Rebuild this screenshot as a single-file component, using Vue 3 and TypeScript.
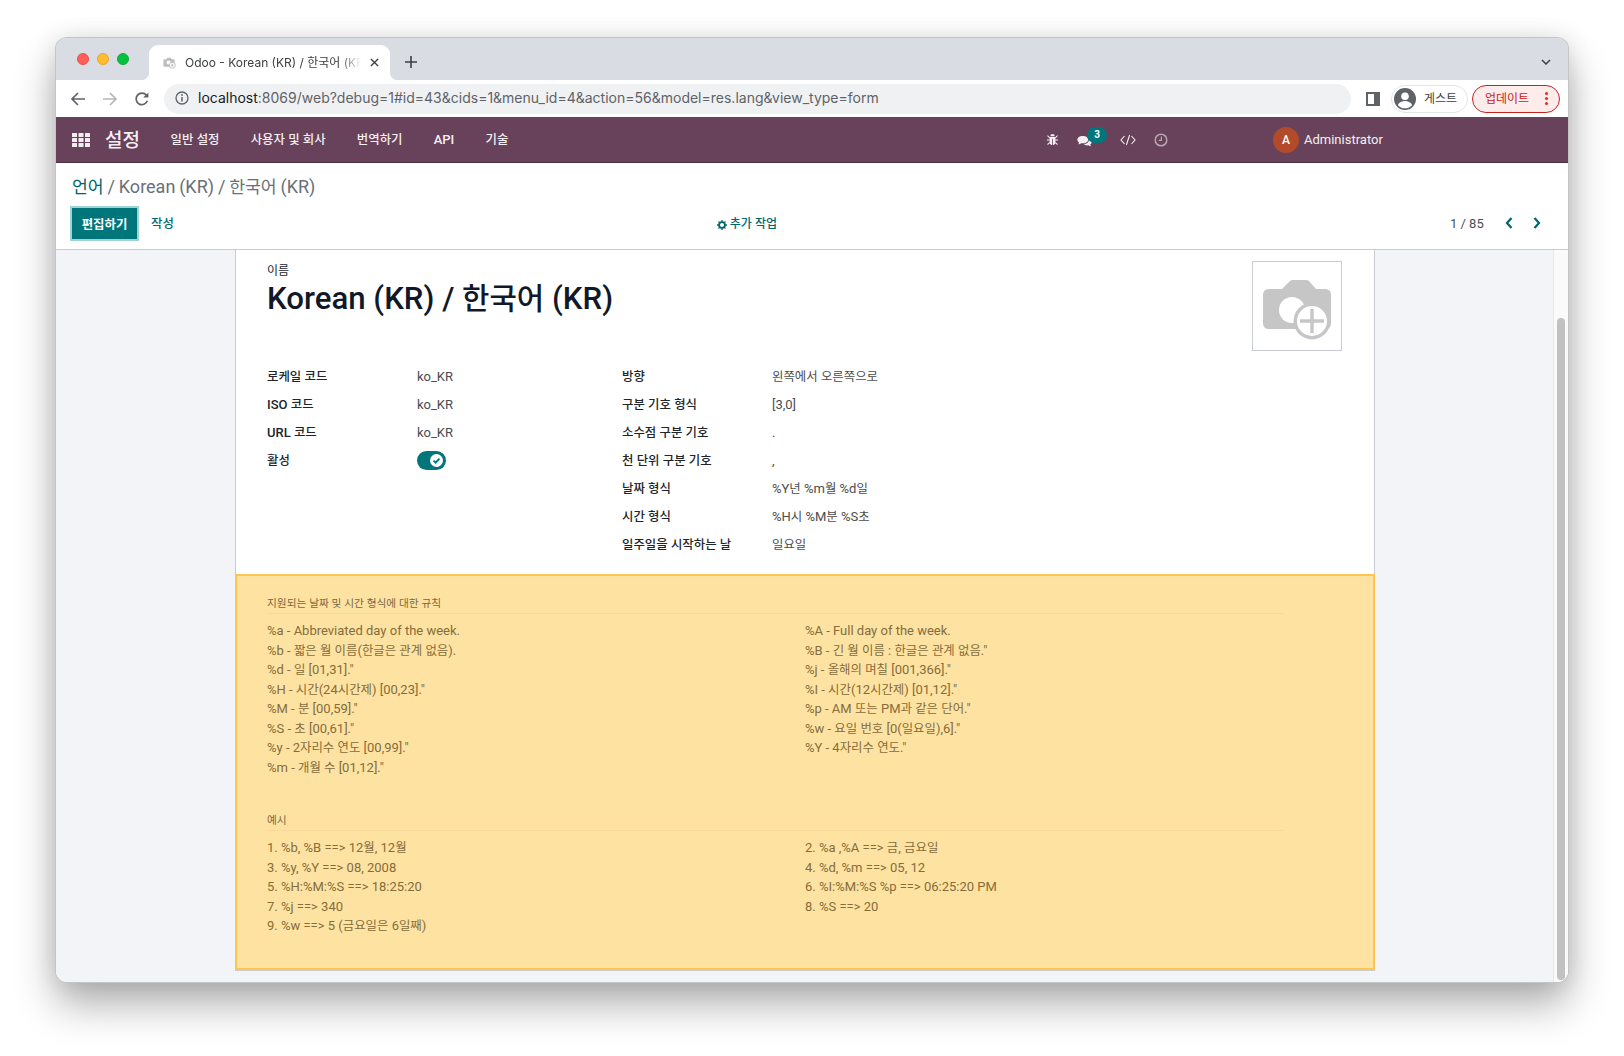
<template>
  <div class="desktop">
    <div class="window">
      <!-- Browser chrome -->
      <div class="tabstrip">
        <div class="traffic">
          <span class="light red" />
          <span class="light yellow" />
          <span class="light green" />
        </div>
        <div class="tab">
          <svg class="favicon" viewBox="0 0 14 14">
            <path fill="#bdbdbd" d="M1.5 3.5h2.2l1-1.5h3.6l1 1.5h2.2q1 0 1 1v6q0 1-1 1h-10q-1 0-1-1v-6q0-1 1-1z" />
            <circle cx="6" cy="7" r="2.2" fill="#fff" />
            <circle cx="10" cy="10" r="3.2" fill="#fff" stroke="#bdbdbd" />
            <path d="M8.4 10h3.2M10 8.4v3.2" stroke="#bdbdbd" />
          </svg>
          <span class="tab-title">Odoo - Korean (KR) / 한국어 (KR)</span>
          <svg class="tab-close" viewBox="0 0 10 10">
            <path d="M1 1l8 8M9 1l-8 8" stroke="#3c4043" stroke-width="1.5" fill="none" />
          </svg>
        </div>
        <svg class="new-tab" viewBox="0 0 12 12">
          <path d="M6 0v12M0 6h12" stroke="#3c4043" stroke-width="1.6" fill="none" />
        </svg>
        <svg class="tab-menu" viewBox="0 0 10 6">
          <path d="M1 1l4 4 4-4" stroke="#3c4043" stroke-width="1.5" fill="none" />
        </svg>
      </div>

      <div class="toolbar">
        <svg class="tool" viewBox="0 0 16 16">
          <path d="M15 8H2M8 2L2 8l6 6" stroke="#5f6368" stroke-width="1.7" fill="none" />
        </svg>
        <svg class="tool" viewBox="0 0 16 16">
          <path d="M1 8h13M8 2l6 6-6 6" stroke="#b4b6b9" stroke-width="1.7" fill="none" />
        </svg>
        <svg class="tool" viewBox="0 0 16 16">
          <path d="M13.4 9.8a5.8 5.8 0 1 1-1-5.6" stroke="#5f6368" stroke-width="1.7" fill="none" />
          <path d="M14.4 1.4v5.2H9.2z" fill="#5f6368" />
        </svg>
        <div class="urlbar">
          <svg class="info" viewBox="0 0 14 14">
            <circle cx="7" cy="7" r="6" stroke="#5f6368" stroke-width="1.3" fill="none" />
            <path d="M7 6v4.4" stroke="#5f6368" stroke-width="1.5" />
            <circle cx="7" cy="4" r="0.9" fill="#5f6368" />
          </svg>
          <span class="url"><b>localhost</b>:8069/web?debug=1#id=43&amp;cids=1&amp;menu_id=4&amp;action=56&amp;model=res.lang&amp;view_type=form</span>
        </div>
        <svg class="side-panel" viewBox="0 0 14 14">
          <path d="M0 0h14v14H0z" fill="#5f6368" />
          <path d="M2 2h6v10H2z" fill="#fff" />
        </svg>
        <div class="guest">
          <svg class="guest-ava" viewBox="0 0 22 22">
            <circle cx="11" cy="11" r="11" fill="#5f6368" />
            <circle cx="11" cy="8.2" r="3.8" fill="#fff" />
            <path d="M3.8 17c1.6-3 4.4-4 7.2-4s5.6 1 7.2 4a9.4 9.4 0 0 1-14.4 0z" fill="#fff" />
          </svg>
          <span class="pill-text">게스트</span>
        </div>
        <div class="update">
          <span class="pill-text">업데이트</span>
          <span class="dots"><i /><i /><i /></span>
        </div>
      </div>

      <!-- Odoo navbar -->
      <nav class="navbar">
        <svg class="apps" viewBox="0 0 18 14">
          <g fill="#f3eef1">
            <template v-for="y in [0, 5, 10]" :key="y">
              <rect v-for="x in [0, 6.5, 13]" :key="x" :x="x" :y="y" width="5" height="4" rx="0.5" />
            </template>
          </g>
        </svg>
        <span class="brand">설정</span>
        <a v-for="item in menu" :key="item" class="menu-item"><Txt :t="item" /></a>
        <div class="nav-right">
          <svg class="sys bug" viewBox="0 0 14 14">
            <path fill="#f4eff2" d="M4.6 3.6a2.4 2.4 0 0 1 4.8 0zM3.8 4.4h6.4v5.4a3.2 3.2 0 0 1-2.8 3.2V6.4h-.8V13a3.2 3.2 0 0 1-2.8-3.2z" />
            <path stroke="#f4eff2" stroke-width="1.1" d="M1.6 2.8l2.4 2.4M12.4 2.8L10 5.2M1 7.6h3M13 7.6h-3M1.6 12.4L4 10.4M12.4 12.4L10 10.4" fill="none" />
          </svg>
          <div class="chat">
            <svg class="chat-icon" viewBox="0 0 18 14">
              <path fill="#f4eff2" d="M7 1c3.6 0 6.4 1.9 6.4 4.4S10.6 9.8 7 9.8c-.7 0-1.4-.1-2-.2C4 10.4 2.700 11 1.400 11c.6-.7 1-1.500 1.100-2.300C1.200 7.900.4 6.700.4 5.400.4 2.900 3.400 1 7 1z" />
              <path fill="#f4eff2" d="M14.400 4.400c1.900.7 3.200 2.100 3.200 3.800 0 1.200-.7 2.300-1.700 3 .1.800.5 1.500 1 2.100-1.200 0-2.300-.5-3.200-1.200-.5.1-1 .2-1.500.2-1.600 0-3-.5-4-1.400 3.600-.1 6.400-2.400 6.200-6.500z" />
            </svg>
            <span class="badge">3</span>
          </div>
          <svg class="sys code" viewBox="0 0 16 12">
            <path d="M4.500 2L1 6l3.500 4M11.500 2L15 6l-3.500 4M9.600 1L6.400 11" stroke="#f4eff2" stroke-width="1.1" fill="none" />
          </svg>
          <svg class="sys clock" viewBox="0 0 14 14">
            <circle cx="7" cy="7" r="5.800" stroke="#b8a6b1" stroke-width="1.500" fill="none" />
            <path d="M7.400 3.400v4H4.800" stroke="#b8a6b1" stroke-width="1.200" fill="none" />
          </svg>
          <span class="avatar">A</span>
          <span class="user">Administrator</span>
        </div>
      </nav>

      <!-- Control panel -->
      <div class="control-panel">
        <div class="breadcrumb"><a><Txt t="언어" /></a> / <Txt t="Korean (KR) / 한국어 (KR)" /></div>
        <div class="cp-row">
          <button class="btn-edit">편집하기</button>
          <a class="btn-create">작성</a>
          <a class="action">
            <svg class="gear" viewBox="0 0 10 10">
              <circle cx="5" cy="5" r="2.900" stroke="#00666b" stroke-width="1.800" fill="none" />
              <path d="M5 0v2M5 8v2M0 5h2M8 5h2M1.500 1.500l1.400 1.400M7.100 7.100l1.400 1.400M8.500 1.500L7.100 2.900M2.900 7.100L1.500 8.500" stroke="#00666b" stroke-width="1.300" />
            </svg>
            추가 작업
          </a>
          <span class="pager">1 / 85</span>
          <svg class="chev" viewBox="0 0 8 12">
            <path d="M6.500 1L2 6l4.500 5" stroke="#00666b" stroke-width="2.200" fill="none" />
          </svg>
          <svg class="chev next" viewBox="0 0 8 12">
            <path d="M1.500 1L6 6l-4.500 5" stroke="#00666b" stroke-width="2.200" fill="none" />
          </svg>
        </div>
      </div>

      <!-- Form view -->
      <div class="content">
        <div class="scroll-area">
          <div class="sheet">
            <div class="sheet-head">
              <div>
                <div class="name-label">이름</div>
                <h1 class="name"><Txt t="Korean (KR) / 한국어 (KR)" /></h1>
              </div>
              <div class="image-box">
                <svg viewBox="0 0 68 54" class="camera">
                  <path fill="#c6c6c6" d="M6 9h13l8-8q1-1 3-1h13q2 0 3 1l7 8h9q6 0 6 6v28q0 6-6 6H6q-6 0-6-6V15q0-6 6-6z" />
                  <circle cx="29" cy="30" r="13" fill="#fff" />
                  <circle cx="49" cy="41" r="18.500" fill="#c6c6c6" />
                  <circle cx="49" cy="41" r="15" fill="#fff" />
                  <path d="M49 29v24M37 41h24" stroke="#c6c6c6" stroke-width="3.400" />
                </svg>
              </div>
            </div>
            <div class="fields">
              <div class="group first">
                <div v-for="f in leftFields" :key="f.label" class="field">
                  <span class="label"><Txt :t="f.label" /></span>
                  <span class="value"><Txt :t="f.value" /></span>
                </div>
                <div class="field">
                  <span class="label"><Txt t="활성" /></span>
                  <span class="toggle">
                    <svg viewBox="0 0 14 14" class="knob">
                      <circle cx="7" cy="7" r="7" fill="#fff" />
                      <path d="M3.800 7.100l2.300 2.300 4.100-4.500" fill="none" stroke="#00767b" stroke-width="2" />
                    </svg>
                  </span>
                </div>
              </div>
              <div class="group">
                <div v-for="f in rightFields" :key="f.label" class="field">
                  <span class="label"><Txt :t="f.label" /></span>
                  <span class="value"><Txt :t="f.value" /></span>
                </div>
              </div>
            </div>
            <div class="alert">
              <h3 class="alert-title"><Txt t="지원되는 날짜 및 시간 형식에 대한 규칙" /></h3>
              <div class="columns rules">
                <div><div v-for="l in rulesLeft" :key="l"><Txt :t="l" /></div></div>
                <div><div v-for="l in rulesRight" :key="l"><Txt :t="l" /></div></div>
              </div>
              <h3 class="alert-title example"><Txt t="예시" /></h3>
              <div class="columns">
                <div><div v-for="l in examplesLeft" :key="l"><Txt :t="l" /></div></div>
                <div><div v-for="l in examplesRight" :key="l"><Txt :t="l" /></div></div>
              </div>
            </div>
          </div>
        </div>
        <div class="scrollbar"><div class="thumb" /></div>
      </div>
    </div>
  </div>
</template>

<script setup lang="ts">
import { h } from "vue";

interface Field {
  label: string;
  value: string;
}

// hangul runs get their own span, the reference's hangul face is narrower than Noto
const Txt = (props: { t: string }) =>
  props.t
    .split(/([\uAC00-\uD7A3]+)/)
    .map((run, i) => (i % 2 ? h("span", { class: "ko" }, run) : run));

const menu: string[] = ["일반 설정", "사용자 및 회사", "번역하기", "API", "기술"];

const leftFields: Field[] = [
  { label: "로케일 코드", value: "ko_KR" },
  { label: "ISO 코드", value: "ko_KR" },
  { label: "URL 코드", value: "ko_KR" },
];

const rightFields: Field[] = [
  { label: "방향", value: "왼쪽에서 오른쪽으로" },
  { label: "구분 기호 형식", value: "[3,0]" },
  { label: "소수점 구분 기호", value: "." },
  { label: "천 단위 구분 기호", value: "," },
  { label: "날짜 형식", value: "%Y년 %m월 %d일" },
  { label: "시간 형식", value: "%H시 %M분 %S초" },
  { label: "일주일을 시작하는 날", value: "일요일" },
];

const rulesLeft: string[] = [
  "%a - Abbreviated day of the week.",
  "%b - 짧은 월 이름(한글은 관계 없음).",
  '%d - 일 [01,31]."',
  '%H - 시간(24시간제) [00,23]."',
  '%M - 분 [00,59]."',
  '%S - 초 [00,61]."',
  '%y - 2자리수 연도 [00,99]."',
  '%m - 개월 수 [01,12]."',
];

const rulesRight: string[] = [
  "%A - Full day of the week.",
  '%B - 긴 월 이름 : 한글은 관계 없음."',
  '%j - 올해의 며칠 [001,366]."',
  '%I - 시간(12시간제) [01,12]."',
  '%p - AM 또는 PM과 같은 단어."',
  '%w - 요일 번호 [0(일요일),6]."',
  '%Y - 4자리수 연도."',
];

const examplesLeft: string[] = [
  "1. %b, %B ==> 12월, 12월",
  "3. %y, %Y ==> 08, 2008",
  "5. %H:%M:%S ==> 18:25:20",
  "7. %j ==> 340",
  "9. %w ==> 5 (금요일은 6일째)",
];

const examplesRight: string[] = [
  "2. %a ,%A ==> 금, 금요일",
  "4. %d, %m ==> 05, 12",
  "6. %I:%M:%S %p ==> 06:25:20 PM",
  "8. %S ==> 20",
];
</script>

<style>
html,
body {
  margin: 0;
  background: #fff;
}
.ko {
  font-size: 0.955em;
}
</style>

<style scoped>
.desktop {
  width: 1624px;
  height: 1056px;
  padding: 38px 56px 74px;
  box-sizing: border-box;
  overflow: hidden;
  font-family: Roboto, "Noto Sans CJK KR", sans-serif;
  font-size: 13px;
  line-height: 19.5px;
  color: #4c4c4c;
}

.window {
  height: 944px;
  display: flex;
  flex-direction: column;
  border-radius: 11px;
  overflow: hidden;
  background: #f3f4f8;
  box-shadow: 0 0 0 1px #c4c5c8, 0 22px 42px rgba(0, 0, 0, 0.32), 0 0 24px rgba(0, 0, 0, 0.1);
}

/* tab strip */
.tabstrip {
  height: 42px;
  flex: none;
  display: flex;
  align-items: flex-end;
  background: #d9dce3;
}
.traffic {
  display: flex;
  gap: 8px;
  align-self: flex-start;
  padding: 15px 0 0 21px;
  width: 72px;
}
.light {
  width: 12px;
  height: 12px;
  flex: none;
  border-radius: 50%;
  box-sizing: border-box;
}
.red {
  background: #fe5f57;
  border: 1px solid #e5534b;
}
.yellow {
  background: #febc2e;
  border: 1px solid #e5a829;
}
.green {
  background: #05c13f;
  border: 1px solid #0cae38;
}
.tab {
  position: relative;
  width: 241px;
  height: 35px;
  display: flex;
  align-items: center;
  background: #fff;
  border-radius: 9px 9px 0 0;
  padding: 0 11px 0 14px;
  box-sizing: border-box;
  font-size: 12px;
  color: #3c4043;
  font-family: Inter, "Noto Sans CJK KR", sans-serif;
}
.tab::before,
.tab::after {
  content: "";
  position: absolute;
  bottom: 0;
  width: 8px;
  height: 8px;
}
.tab::before {
  left: -8px;
  background: radial-gradient(circle at 0 0, transparent 8px, #fff 8.5px);
}
.tab::after {
  right: -8px;
  background: radial-gradient(circle at 100% 0, transparent 8px, #fff 8.5px);
}
.favicon {
  width: 13px;
  height: 13px;
  flex: none;
  margin-right: 9px;
}
.tab-title {
  flex: 1;
  white-space: nowrap;
  overflow: hidden;
  -webkit-mask-image: linear-gradient(90deg, #000 88%, transparent);
  mask-image: linear-gradient(90deg, #000 88%, transparent);
}
.tab-close {
  width: 9px;
  height: 9px;
  margin-left: 9px;
  flex: none;
}
.new-tab {
  width: 12px;
  height: 12px;
  margin: 0 0 12px 15px;
}
.tab-menu {
  width: 10px;
  height: 6px;
  margin: 0 17px 15px auto;
}

/* toolbar */
.toolbar {
  height: 37px;
  flex: none;
  display: flex;
  align-items: center;
  background: #fff;
  padding: 0 8px 0 14px;
  box-sizing: border-box;
}
.tool {
  width: 16px;
  height: 16px;
  flex: none;
  margin-right: 16px;
}
.urlbar {
  width: 1187px;
  height: 30px;
  flex: none;
  margin-left: -2px;
  display: flex;
  align-items: center;
  padding-left: 11px;
  padding-bottom: 2px;
  box-sizing: border-box;
  border-radius: 15px;
  background: #eff1f3;
  font-family: Inter, sans-serif;
  font-size: 14px;
  color: #5f6368;
}
.info {
  width: 14px;
  height: 14px;
  margin-right: 9px;
}
.url b {
  font-weight: 400;
  color: #202124;
}
.side-panel {
  width: 14px;
  height: 14px;
  margin: 0 11px 0 15px;
  flex: none;
}
.guest {
  width: 77px;
  height: 28px;
  flex: none;
  display: flex;
  align-items: center;
  gap: 8px;
  padding-left: 2px;
  box-sizing: border-box;
  border: 1px solid #e3e5e8;
  border-radius: 14px;
  font-size: 12px;
  color: #3c4043;
}
.guest-ava {
  width: 22px;
  height: 22px;
}
.pill-text {
  padding-top: 2px;
}
.update {
  width: 88px;
  height: 28px;
  flex: none;
  margin-left: 4px;
  display: flex;
  align-items: center;
  padding-left: 12px;
  box-sizing: border-box;
  border: 1px solid #c5221f;
  border-radius: 14px;
  background: #fdecea;
  font-size: 12px;
  color: #c5221f;
}
.dots {
  margin-left: auto;
  margin-right: 11px;
  display: flex;
  flex-direction: column;
  gap: 2px;
}
.dots i {
  width: 3px;
  height: 3px;
  border-radius: 50%;
  background: #d93025;
}

/* navbar */
.navbar {
  height: 46px;
  flex: none;
  display: flex;
  align-items: center;
  background: #68425a;
  border-bottom: 1px solid #4d3043;
  box-sizing: border-box;
  padding-left: 16px;
  color: #f4eff2;
}
.apps {
  width: 18px;
  height: 14px;
  margin-right: 15px;
}
.brand {
  font-size: 19px;
  font-weight: 500;
  margin-right: 15px;
  width: 35px;
  padding-top: 2px;
  white-space: nowrap;
}
.menu-item {
  padding: 1px 15.6px 0;
  font-size: 13px;
  font-weight: 500;
  white-space: nowrap;
}
.nav-right {
  margin-left: auto;
  width: 522px;
  display: flex;
  align-items: center;
}
.sys {
  width: 16px;
  height: 14px;
}
.bug {
  width: 13px;
  height: 13px;
}
.chat {
  position: relative;
  width: 15px;
  height: 14px;
  margin-left: 18px;
}
.chat-icon {
  display: block;
  width: 15px;
  height: 12px;
  margin-top: 2px;
}
.badge {
  position: absolute;
  left: 10px;
  top: -6px;
  width: 20px;
  height: 16px;
  border-radius: 8px;
  background: #00767b;
  color: #fff;
  font-size: 10px;
  font-weight: 700;
  line-height: 16px;
  text-align: center;
}
.code {
  margin-left: 28px;
}
.clock {
  width: 14px;
  height: 14px;
  margin-left: 18px;
}
.avatar {
  width: 26px;
  height: 26px;
  margin-left: 105px;
  border-radius: 50%;
  background: #b34a2a;
  color: #fff;
  font-size: 12px;
  font-weight: 500;
  line-height: 26px;
  text-align: center;
}
.user {
  margin-left: 5px;
  font-size: 13px;
}

/* control panel */
.control-panel {
  height: 87px;
  flex: none;
  box-sizing: border-box;
  padding: 11px 15px 0 16px;
  background: #fff;
  border-bottom: 1px solid #c9ccd2;
}
.breadcrumb {
  font-size: 18px;
  line-height: 26px;
  word-spacing: -0.6px;
  color: #6a707a;
}
.breadcrumb a {
  color: #00666b;
}
.cp-row {
  display: flex;
  align-items: center;
  margin: 6px 0 0 -2px;
}
.btn-edit {
  width: 69px;
  height: 35px;
  padding: 0;
  border: 2px solid #9fd3d5;
  background: #00767b;
  color: #fff;
  font-family: inherit;
  font-size: 12.4px;
  font-weight: 700;
}
.btn-create {
  margin-left: 12px;
  padding-top: 1px;
  font-size: 12.4px;
  font-weight: 500;
  color: #00666b;
}
.action {
  display: flex;
  align-items: center;
  gap: 3px;
  margin-left: 543px;
  padding-top: 2px;
  font-size: 12px;
  font-weight: 500;
  color: #00666b;
}
.gear {
  width: 10px;
  height: 10px;
}
.pager {
  margin-left: 673px;
  font-size: 13px;
  color: #495057;
}
.chev {
  width: 8px;
  height: 12px;
  margin: 0 0 1px 21px;
}
.chev.next {
  margin-left: 20px;
}

/* form */
.content {
  flex: 1;
  min-height: 0;
  display: flex;
  background: #f3f4f8;
}
.scroll-area {
  flex: 1;
  min-width: 0;
  padding-left: 179px;
}
.sheet {
  width: 1140px;
  box-sizing: border-box;
  background: #fff;
  border: 1px solid #c9ccd2;
  border-top: 0;
}
.sheet-head {
  display: flex;
  justify-content: space-between;
  padding: 12px 32px 0 31px;
  height: 102px;
  box-sizing: border-box;
}
.name-label {
  font-size: 12px;
  line-height: 18px;
  color: #212529;
}
.name {
  margin: 0;
  font-size: 31.2px;
  line-height: 38px;
  font-weight: 500;
  color: #111827;
}
.image-box {
  width: 90px;
  height: 90px;
  margin-top: -1px;
  box-sizing: border-box;
  border: 1px solid #c9ccd2;
  display: flex;
  align-items: center;
  justify-content: center;
}
.camera {
  width: 68px;
  height: 54px;
  margin-top: 1px;
  overflow: visible;
}
.fields {
  display: flex;
  padding: 10.5px 0 15.5px 31px;
}
.group {
  display: flex;
  flex-direction: column;
}
.group.first {
  width: 355px;
}
.field {
  height: 28px;
  display: flex;
  align-items: center;
}
.label {
  width: 150px;
  font-weight: 500;
  color: #212529;
}
.toggle {
  width: 29px;
  height: 19px;
  margin-bottom: 1px;
  border-radius: 10px;
  background: #00767b;
  display: flex;
  justify-content: flex-end;
  align-items: center;
  padding-right: 3px;
  box-sizing: border-box;
}
.knob {
  width: 13px;
  height: 13px;
}
.alert {
  height: 396px;
  box-sizing: border-box;
  margin: 0 -1px;
  padding: 20px 89px 0 30px;
  background: #fee2a2;
  border: 2px solid #ffc552;
  color: #856d3a;
}
.alert-title {
  margin: 0 0 7px;
  padding-bottom: 1px;
  font-size: 11.2px;
  line-height: 16px;
  font-weight: 400;
  color: #7a6840;
  border-bottom: 1px solid #f8d99a;
}
.alert-title.example {
  margin: 36px 0 7px;
}
.columns {
  display: grid;
  grid-template-columns: 538px 1fr;
}
.rules {
  min-height: 156px;
}

/* scrollbar */
.scrollbar {
  width: 15px;
  flex: none;
  background: #fafafa;
  border-left: 1px solid #e8e8e8;
  box-sizing: border-box;
  padding: 68px 3px 2px 3px;
}
.thumb {
  height: 100%;
  border-radius: 4px;
  background: #c1c1c1;
}
</style>
